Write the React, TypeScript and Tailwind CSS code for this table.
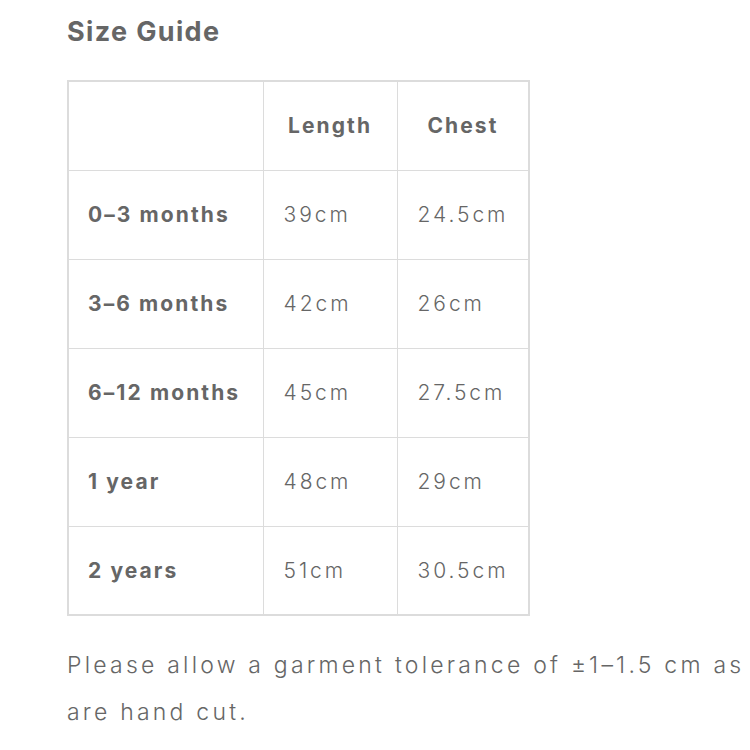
const rows = [
  ["0–3 months", "39cm", "24.5cm"],
  ["3–6 months", "42cm", "26cm"],
  ["6–12 months", "45cm", "27.5cm"],
  ["1 year", "48cm", "29cm"],
  ["2 years", "51cm", "30.5cm"],
];

export default function App() {
  return (
    <div className="w-[750px] h-[750px] overflow-hidden bg-white text-[#666] [font-family:Inter,'Open_Sans',sans-serif]">
      <div className="pl-[67px] pt-[14px]">
        <h2 className="text-[27px] font-bold leading-[36px] tracking-[0.05em]">Size Guide</h2>

        <table className="mt-[30px] border-collapse border-2 border-[#dcdcdc]">
          <thead>
            <tr>
              <th className="w-[195px] h-[89px] border border-[#dcdcdc]"></th>
              <th className="w-[134px] h-[89px] border border-[#dcdcdc] text-center text-[21px] font-bold tracking-[0.1em]">Length</th>
              <th className="w-[132px] h-[89px] border border-[#dcdcdc] text-center text-[21px] font-bold tracking-[0.1em]">Chest</th>
            </tr>
          </thead>
          <tbody>
            {rows.map((r) => (
              <tr key={r[0]}>
                <td className="h-[89px] border border-[#dcdcdc] px-[19px] text-[21px] font-bold tracking-[0.1em]">{r[0]}</td>
                <td className="h-[89px] border border-[#dcdcdc] px-[20px] text-[21px] font-light tracking-[0.14em]">{r[1]}</td>
                <td className="h-[89px] border border-[#dcdcdc] px-[20px] text-[21px] font-light tracking-[0.14em]">{r[2]}</td>
              </tr>
            ))}
          </tbody>
        </table>

        <p className="mt-[26px] whitespace-nowrap text-[23px] font-light leading-[47px] tracking-[0.14em]">
          Please allow a garment tolerance of ±1–1.5 cm as
          <br />
          are hand cut.
        </p>
      </div>
    </div>
  );
}
